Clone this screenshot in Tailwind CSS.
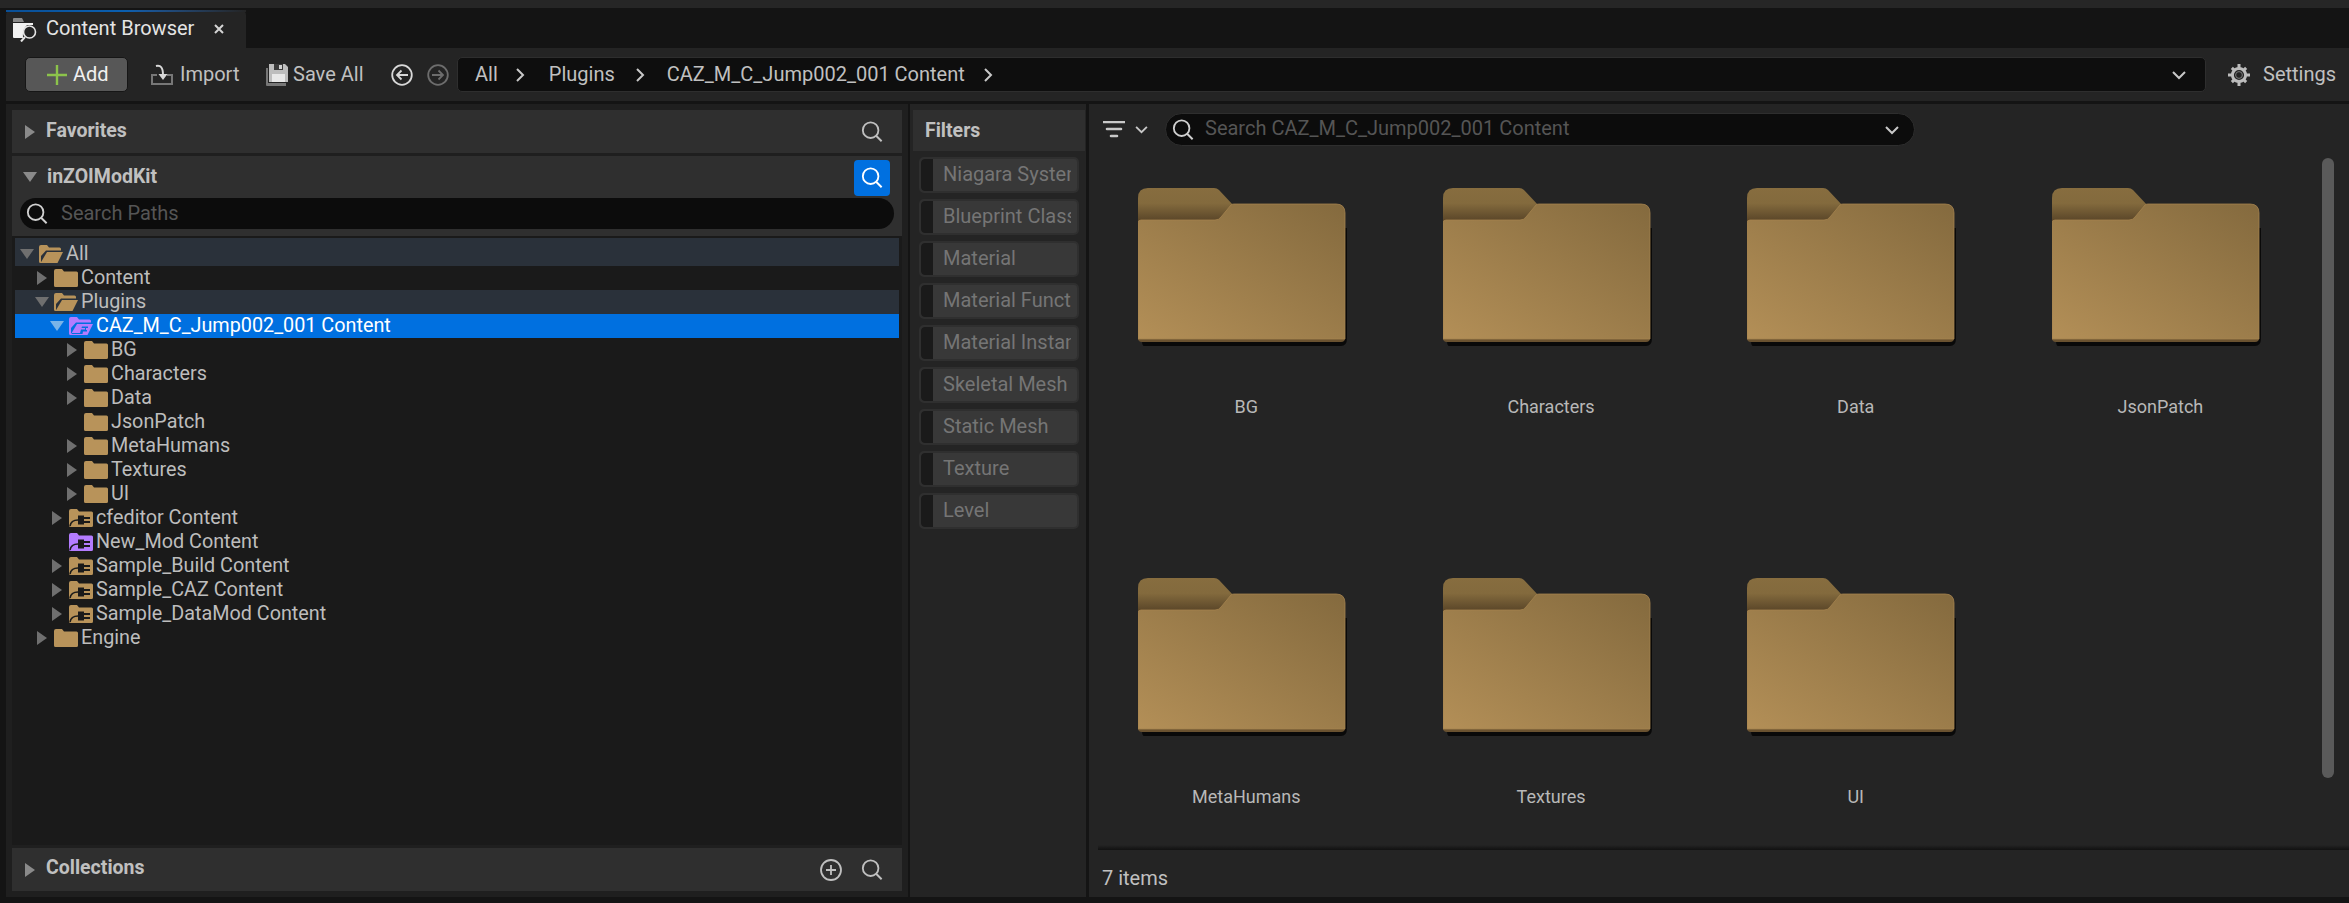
<!DOCTYPE html>
<html lang="en">
<head>
  <meta charset="UTF-8">
  <title>Content Browser</title>
  <script src="https://cdn.jsdelivr.net/npm/@tailwindcss/browser@4"></script>
</head>
<body class="bg-[#141414] text-[#c0c0c0] font-['Roboto',sans-serif] text-[20px] leading-none overflow-hidden">
  <svg class="absolute w-0 h-0">
    <defs>
      <linearGradient id="tabfill" x1="0" y1="0" x2="0" y2="1"><stop offset="0" stop-color="#876d3f"/><stop offset=".45" stop-color="#836a3d"/><stop offset="1" stop-color="#574327"/></linearGradient>
      <linearGradient id="bodyfill" x1="0" y1="1" x2="1" y2="0"><stop offset="0" stop-color="#b38f57"/><stop offset="1" stop-color="#846a3e"/></linearGradient>
      <symbol id="folder" viewBox="0 0 24 18"><path fill="#b8935a" d="M0 2Q0 0 2 0H8L10 2.5H22.5Q24 2.5 24 4V16.5Q24 18 22.5 18H1.5Q0 18 0 16.5Z"/></symbol>
      <symbol id="folder-open" viewBox="0 0 24 18"><path fill="#b8935a" d="M0 2Q0 0 2 0H8L10 2.5H20.5Q22 2.5 22 4V5.5H7L2 11V18H1.5Q0 18 0 16.5Z"/><path fill="#b8935a" d="M8 7H24L18.5 18H1.5Z"/></symbol>
      <symbol id="folder-plug" viewBox="0 0 24 18"><path fill="#b8935a" d="M0 2Q0 0 2 0H8L10 2.5H22.5Q24 2.5 24 4V16.5Q24 18 22.5 18H1.5Q0 18 0 16.5Z"/><path fill="none" stroke="#1a1a1a" stroke-width="1.6" d="M1 17Q2 11 9 11"/><path fill="#1a1a1a" d="M9 6.5H15V15.5H9ZM15 8H21V10H15ZM15 12H21V14H15Z"/></symbol>
      <symbol id="folder-plug-purple" viewBox="0 0 24 18"><path fill="#b47cff" d="M0 2Q0 0 2 0H8L10 2.5H22.5Q24 2.5 24 4V16.5Q24 18 22.5 18H1.5Q0 18 0 16.5Z"/><path fill="none" stroke="#1a1a1a" stroke-width="1.6" d="M1 17Q2 11 9 11"/><path fill="#1a1a1a" d="M9 6.5H15V15.5H9ZM15 8H21V10H15ZM15 12H21V14H15Z"/></symbol>
      <symbol id="folder-open-purple" viewBox="0 0 24 18"><path fill="#b47cff" d="M0 2Q0 0 2 0H8L10 2.5H20.5Q22 2.5 22 4V5.5H7L2 11V18H1.5Q0 18 0 16.5Z"/><path fill="#b47cff" d="M8 7H24L18.5 18H1.5Z"/><path fill="#0070e0" d="M3 16H11L12 12.5H16V11H12.5L13 9.5H19V11H17V13H18V14.5H14L13.5 17H3Z"/></symbol>
      <symbol id="search" viewBox="0 0 24 24"><circle cx="10.5" cy="10" r="8.5" fill="none" stroke="currentColor" stroke-width="2"/><path d="M16.5 16L22.5 22" fill="none" stroke="currentColor" stroke-width="2.2"/></symbol>
      <symbol id="chev" viewBox="0 0 14 10"><path d="M1 2L7 8L13 2" fill="none" stroke="currentColor" stroke-width="2"/></symbol>
      <symbol id="crumb" viewBox="0 0 10 14"><path d="M2 1L8 7L2 13" fill="none" stroke="currentColor" stroke-width="2"/></symbol>
      <symbol id="arrow-right" viewBox="0 0 10 14"><path d="M0 0L10 7L0 14Z" fill="currentColor"/></symbol>
      <symbol id="arrow-down" viewBox="0 0 14 10"><path d="M0 0H14L7 10Z" fill="currentColor"/></symbol>
      <symbol id="big-folder" viewBox="0 0 212 160">
        <path fill="#000" opacity=".75" d="M4 40H209V150Q209 158 203 158H6Q4 158 4 152Z"/>
        <path fill="url(#tabfill)" d="M0 34V10Q0 0 10 0H76Q79 0 81 2L96 18V34Z"/>
        <path fill="#6a5230" d="M0 140H207V150Q207 154 203 154H4Q0 154 0 150Z"/>
        <path fill="url(#bodyfill)" stroke="#a5834e" stroke-width=".8" d="M0 35Q0 32 3 32H77Q81 32 83 29L93 17Q94 16 96 16H198Q207 16 207 25V151H0Z"/>
      </symbol>
    </defs>
  </svg>

  <div class="w-[2349px] h-[903px] flex flex-col">
    <!-- top strip and tab -->
    <div class="h-[8px] bg-[#262626]"></div>
    <div class="h-[40px] pl-[6px] flex items-end">
      <div class="w-[240px] h-[38px] bg-[#242424] rounded-t-[5px] relative flex items-center pl-[7px]">
        <div class="absolute left-0 right-0 top-0 h-[2px] bg-linear-to-r from-[#0a4f96] via-[#0a5fb0] to-[#242424]"></div>
        <svg class="w-[24px] h-[25px]" viewBox="0 0 24 25">
          <path fill="#f2f2f2" d="M0 6H20V8H14Q9 13 10 21H1Q0 21 0 20Z"/>
          <path fill="#8a8a8a" d="M1 1H9L11 5H0V2Q0 1 1 1Z"/>
          <circle cx="16.5" cy="15" r="6" fill="#242424" stroke="#e6e6e6" stroke-width="1.6"/>
          <path d="M12 20L8 24.5" stroke="#e6e6e6" stroke-width="2"/>
        </svg>
        <span class="ml-[9px] pb-[2px] text-[#e4e4e4]">Content Browser</span>
        <svg class="w-[10px] h-[10px] ml-[20px]" viewBox="0 0 10 10"><path d="M1 1L9 9M9 1L1 9" stroke="#d4d4d4" stroke-width="2"/></svg>
      </div>
    </div>

    <!-- toolbar -->
    <div class="ml-[6px] h-[53px] bg-[#242424] flex items-center pl-[19px] whitespace-nowrap">
      <button class="w-[103px] h-[35px] shrink-0 bg-[#575757] border border-[#161616] rounded-[5px] flex items-center pl-[21px] text-[#f0f0f0]">
        <svg class="w-[20px] h-[20px]" viewBox="0 0 20 20"><path d="M10 0V20M0 10H20" stroke="#8cc34b" stroke-width="2.4"/></svg>
        <span class="ml-[6px] pb-[2px]">Add</span>
      </button>
      <svg class="w-[24px] h-[24px] ml-[22px] shrink-0" viewBox="0 0 24 24">
        <path d="M1 11V22H23V11H17V13H21V20H3V13H7V11Z" fill="#777"/>
        <path d="M6 3Q13 1 13 12" fill="none" stroke="#d8d8d8" stroke-width="2"/>
        <path d="M8.5 11H17.5L13 17Z" fill="#d8d8d8"/>
      </svg>
      <span class="ml-[6px] pb-[2px] w-[58px]">Import</span>
      <svg class="w-[22px] h-[22px] ml-[28px] shrink-0" viewBox="0 0 22 22">
        <path d="M0 4H2V19H20V22H1Q0 22 0 21Z" fill="#777"/>
        <path d="M3 0H19L22 3V18H3Z" fill="#bdbdbd"/>
        <path d="M8 0H17V6H8Z" fill="#3a3a3a"/>
        <path d="M13 1H16V5H13Z" fill="#d0d0d0"/>
        <path d="M6 10H19V18H6Z" fill="#e8e8e8"/>
      </svg>
      <span class="ml-[5px] pb-[2px] w-[71px]">Save All</span>
      <svg class="w-[22px] h-[22px] ml-[27px] shrink-0" viewBox="0 0 22 22">
        <circle cx="11" cy="11" r="9.8" fill="none" stroke="#d8d8d8" stroke-width="1.8"/>
        <path d="M17 11H6M10.5 6.5L6 11L10.5 15.5" fill="none" stroke="#d8d8d8" stroke-width="1.8"/>
      </svg>
      <svg class="w-[22px] h-[22px] ml-[14px] shrink-0" viewBox="0 0 22 22">
        <circle cx="11" cy="11" r="9.8" fill="none" stroke="#6d6d6d" stroke-width="1.8"/>
        <path d="M5 11H16M11.5 6.5L16 11L11.5 15.5" fill="none" stroke="#6d6d6d" stroke-width="1.8"/>
      </svg>
      <div class="ml-[8px] w-[1749px] h-[35px] shrink-0 bg-[#0e0e0e] border border-[#2e2e2e] rounded-[5px] flex items-center pl-[17px] pr-[19px]">
        <span class="pb-[2px]">All</span>
        <svg class="w-[10px] h-[14px] ml-[17px] text-[#c8c8c8]"><use href="#crumb"/></svg>
        <span class="ml-[24px] pb-[2px]">Plugins</span>
        <svg class="w-[10px] h-[14px] ml-[20px] text-[#c8c8c8]"><use href="#crumb"/></svg>
        <span class="ml-[22px] pb-[2px]">CAZ_M_C_Jump002_001 Content</span>
        <svg class="w-[10px] h-[14px] ml-[18px] text-[#c8c8c8]"><use href="#crumb"/></svg>
        <svg class="w-[14px] h-[10px] ml-auto text-[#c8c8c8]"><use href="#chev"/></svg>
      </div>
      <svg class="w-[22px] h-[22px] ml-[22px] shrink-0" viewBox="0 0 22 22">
        <circle cx="11" cy="11" r="6.6" fill="none" stroke="#bdbdbd" stroke-width="3"/>
        <circle cx="11" cy="11" r="3.4" fill="none" stroke="#7c7c7c" stroke-width="1"/>
        <path d="M9.5 0H12.5V4H9.5ZM9.5 18H12.5V22H9.5ZM0 9.5H4V12.5H0ZM18 9.5H22V12.5H18ZM2.8 4.9L4.9 2.8L7.7 5.6L5.6 7.7ZM14.3 16.4L16.4 14.3L19.2 17.1L17.1 19.2ZM17.1 2.8L19.2 4.9L16.4 7.7L14.3 5.6ZM5.6 14.3L7.7 16.4L4.9 19.2L2.8 17.1Z" fill="#bdbdbd"/>
      </svg>
      <span class="ml-[13px] pb-[2px]">Settings</span>
    </div>

    <!-- main -->
    <div class="ml-[6px] mt-[3px] mb-[6px] flex-1 flex min-h-0">
      <!-- left column -->
      <div class="w-[902px] px-[6px] pt-[6px] pb-[6px] bg-[#1f1f1f] flex flex-col gap-[3px] shrink-0">
        <div class="h-[43px] bg-[#2f2f2f] flex items-center pl-[13px] pr-[10px] shrink-0">
          <svg class="w-[10px] h-[14px] text-[#8a8a8a]"><use href="#arrow-right"/></svg>
          <span class="ml-[11px] pb-[2px] font-bold text-[19.5px]">Favorites</span>
          <svg class="w-[22px] h-[22px] ml-auto mr-[9px] text-[#c0c0c0]"><use href="#search"/></svg>
        </div>
        <div class="flex-1 flex flex-col min-h-0 bg-[#1a1a1a]">
          <div class="h-[80px] bg-[#2f2f2f] shrink-0">
            <div class="h-[42px] flex items-center pl-[11px] pr-[12px]">
              <svg class="w-[14px] h-[10px] text-[#8a8a8a]"><use href="#arrow-down"/></svg>
              <span class="ml-[10px] font-bold text-[19.5px]">inZOIModKit</span>
              <div class="ml-auto w-[36px] h-[36px] mt-[1px] bg-[#0070e0] rounded-[4px] flex items-center justify-center text-white">
                <svg class="w-[22px] h-[22px]"><use href="#search"/></svg>
              </div>
            </div>
            <div class="mx-[8px] h-[31px] bg-[#0c0c0c] rounded-full flex items-center pl-[6px] text-[#555]">
              <svg class="w-[22px] h-[22px] text-[#d0d0d0]"><use href="#search"/></svg>
              <span class="ml-[13px] pb-[1px]">Search Paths</span>
            </div>
          </div>
          <!-- tree -->
          <div id="tree" class="px-[3px] pt-[2px] flex flex-col text-[#bdbdbd] text-[19.8px]"></div>
        </div>
        <div class="h-[43px] bg-[#2f2f2f] flex items-center pl-[13px] pr-[10px] shrink-0">
          <svg class="w-[10px] h-[14px] text-[#8a8a8a]"><use href="#arrow-right"/></svg>
          <span class="ml-[11px] pb-[3px] font-bold text-[19.5px]">Collections</span>
          <svg class="w-[22px] h-[22px] ml-auto" viewBox="0 0 22 22"><circle cx="11" cy="11" r="10" fill="none" stroke="#c0c0c0" stroke-width="1.8"/><path d="M11 6V16M6 11H16" stroke="#c0c0c0" stroke-width="1.8"/></svg>
          <svg class="w-[22px] h-[22px] ml-[19px] mr-[9px] text-[#c0c0c0]"><use href="#search"/></svg>
        </div>
      </div>

      <!-- filters -->
      <div class="w-[178px] shrink-0 border-l-2 border-[#141414] bg-[#242424] pt-[6px] flex flex-col">
        <div class="ml-[3px] w-[172px] h-[41px] bg-[#2f2f2f] flex items-center pl-[12px] font-bold text-[19.5px]">Filters</div>
        <div id="filters" class="mt-[6px] ml-[9px] flex flex-col gap-[6px]"></div>
      </div>

      <!-- asset view -->
      <div class="ml-[3px] flex-1 bg-[#242424] flex flex-col relative min-w-0">
        <div class="pt-[9px] pl-[14px] flex items-center shrink-0">
          <svg class="w-[22px] h-[18px]" viewBox="0 0 22 18"><path d="M0 1H22M4 8H18M8 15H14" stroke="#c8c8c8" stroke-width="2.6" stroke-linecap="round"/></svg>
          <svg class="w-[13px] h-[9px] ml-[10px] text-[#c8c8c8]"><use href="#chev"/></svg>
          <div class="ml-[17px] w-[750px] h-[33px] bg-[#0c0c0c] border border-[#2e2e2e] rounded-full flex items-center pl-[6px] pr-[15px] text-[#555]">
            <svg class="w-[22px] h-[22px] text-[#d0d0d0]"><use href="#search"/></svg>
            <span class="ml-[11px] pb-[3px]">Search CAZ_M_C_Jump002_001 Content</span>
            <svg class="w-[14px] h-[10px] ml-auto text-[#c8c8c8]"><use href="#chev"/></svg>
          </div>
        </div>
        <div id="grid" class="mt-[42px] ml-[5px] flex-1 grid grid-cols-[repeat(4,304.7px)] auto-rows-[390px] min-h-0 overflow-hidden"></div>
        <div class="absolute left-[1233px] top-[54px] w-[12px] h-[620px] bg-[#5a5a5a] rounded-full"></div>
        <div class="ml-[9px] h-[5px] bg-linear-to-b from-[#242424] to-[#111] shrink-0"></div>
        <div class="h-[47px] pl-[13px] pt-[18px] shrink-0">7 items</div>
      </div>
    </div>
  </div>

  <script>
    const treeRows = [
      { d: 0, name: "All", icon: "folder-open", open: true, hl: true, tall: true },
      { d: 1, name: "Content", icon: "folder", arrow: true },
      { d: 1, name: "Plugins", icon: "folder-open", open: true, hl: true },
      { d: 2, name: "CAZ_M_C_Jump002_001 Content", icon: "folder-open-purple", open: true, sel: true },
      { d: 3, name: "BG", icon: "folder", arrow: true },
      { d: 3, name: "Characters", icon: "folder", arrow: true },
      { d: 3, name: "Data", icon: "folder", arrow: true },
      { d: 3, name: "JsonPatch", icon: "folder" },
      { d: 3, name: "MetaHumans", icon: "folder", arrow: true },
      { d: 3, name: "Textures", icon: "folder", arrow: true },
      { d: 3, name: "UI", icon: "folder", arrow: true },
      { d: 2, name: "cfeditor Content", icon: "folder-plug", arrow: true },
      { d: 2, name: "New_Mod Content", icon: "folder-plug-purple" },
      { d: 2, name: "Sample_Build Content", icon: "folder-plug", arrow: true },
      { d: 2, name: "Sample_CAZ Content", icon: "folder-plug", arrow: true },
      { d: 2, name: "Sample_DataMod Content", icon: "folder-plug", arrow: true },
      { d: 1, name: "Engine", icon: "folder", arrow: true }
    ];

    document.getElementById("tree").innerHTML = treeRows.map(r => {
      let bg = r.sel ? "bg-[#0070e0] text-white" : r.hl ? "bg-[#2a313a]" : "";
      let arrow = "";
      if (r.open) arrow = `<svg class="w-[14px] h-[10px] ${r.sel ? 'text-[#7ab4e8]' : 'text-[#6f6f6f]'}"><use href="#arrow-down"/></svg>`;
      else if (r.arrow) arrow = `<svg class="w-[10px] h-[14px] text-[#6f6f6f]"><use href="#arrow-right"/></svg>`;
      return `<div class="${r.tall ? 'h-[28px] pt-[4px]' : 'h-[24px]'} ${bg} flex items-center" style="padding-left:${4 + 15 * r.d}px">
        <div class="w-[16px] flex justify-center">${arrow}</div>
        <svg class="w-[24px] h-[18px] ml-[4px]"><use href="#${r.icon}"/></svg>
        <span class="ml-[3px]">${r.name}</span>
      </div>`;
    }).join("");

    const filterNames = ["Niagara System", "Blueprint Class", "Material", "Material Function", "Material Instance", "Skeletal Mesh", "Static Mesh", "Texture", "Level"];
    document.getElementById("filters").innerHTML = filterNames.map(name => `
      <div class="w-[160px] h-[36px] bg-[#383838] border-2 border-[#2f2f2f] rounded-[5px] flex items-center text-[#757575]">
        <div class="w-[12px] h-full bg-[#1a1a1a] rounded-l-[4px]"></div>
        <span class="ml-[10px] w-[128px] overflow-hidden whitespace-nowrap leading-[24px] pb-[2px]">${name}</span>
      </div>`).join("");

    const folderNames = ["BG", "Characters", "Data", "JsonPatch", "MetaHumans", "Textures", "UI"];
    document.getElementById("grid").innerHTML = folderNames.map(name => `
      <div class="flex flex-col">
        <svg class="w-[212px] h-[160px] ml-[44px]"><use href="#big-folder"/></svg>
        <div class="mt-[50px] text-center text-[18px] text-[#b8b8b8]">${name}</div>
      </div>`).join("");
  </script>
</body>
</html>
